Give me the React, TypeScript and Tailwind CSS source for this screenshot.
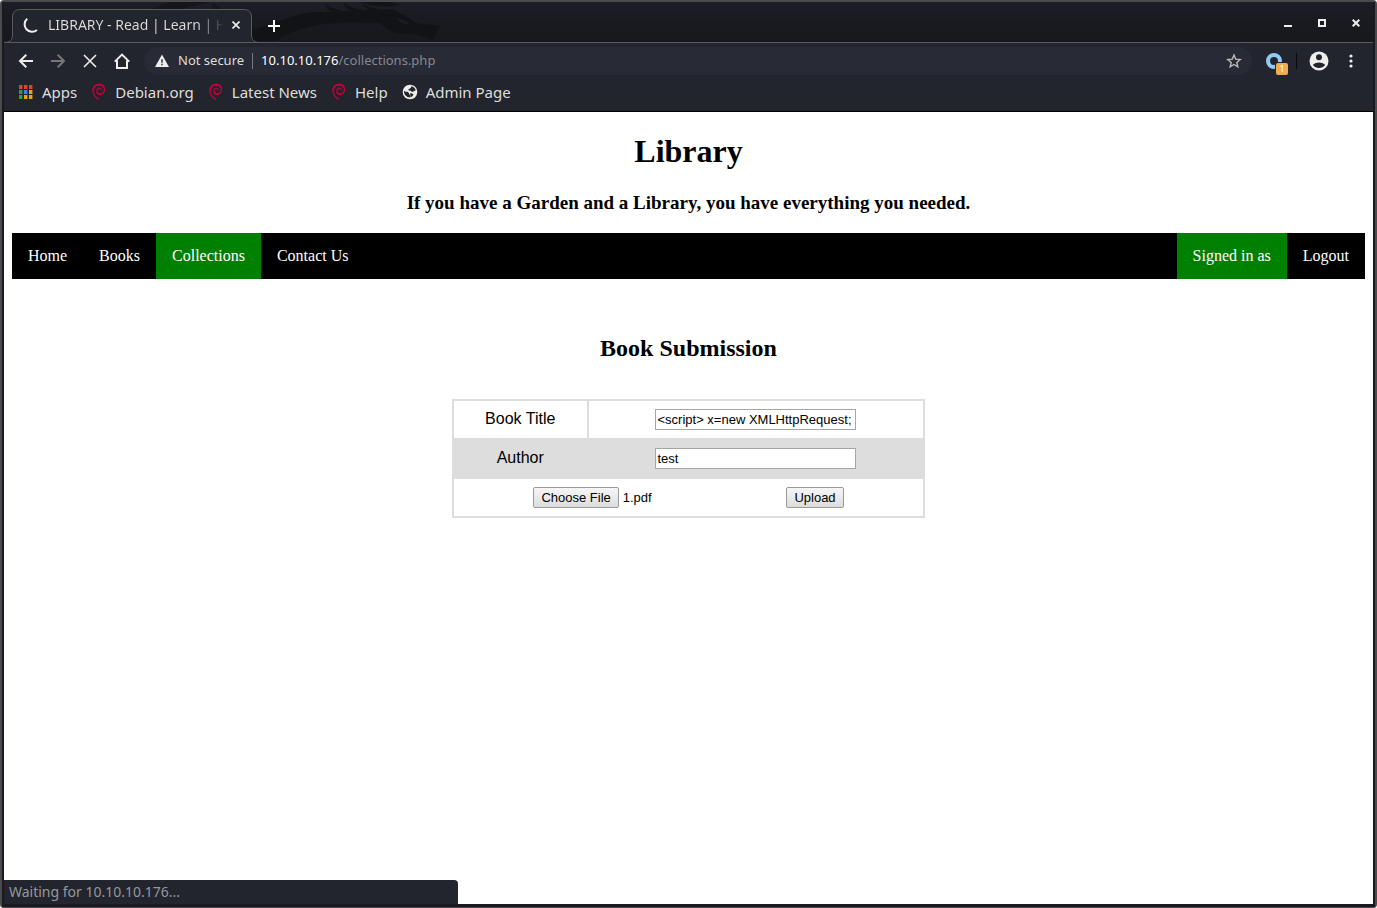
import { useEffect, useRef } from "react";
import type { ReactNode } from "react";

function DebianSwirl() {
  return (
    <svg width="16" height="18" viewBox="0 0 16 18" fill="none" stroke="#c4003a" strokeLinecap="round" aria-hidden="true">
      <path d="M7.600 16.400C4.200 14.300 2 11.400 2 7.800 2 4 4.600 1.500 8 1.500c3.400 0 5.700 2.200 5.500 5.200-.1 2.600-2 4.500-4.200 4.400-2-.1-3.400-1.500-3.400-3.200 0-1.600 1.200-2.800 2.600-2.700 1 .1 1.700.7 1.700 1.500" strokeWidth="1.300" />
      <path d="M2.200 6.500C2.800 3.400 5 1.700 8 1.600c2 0 3.800.8 4.800 2.400" strokeWidth="1.800" />
      <path d="M10.300 10.800c-1.500.7-3.300 0-4.100-1.500" strokeWidth="1.500" />
    </svg>
  );
}

function AppsGrid() {
  const colors = ["#ef3b2f", "#ef3b2f", "#ef3b2f", "#2e9e52", "#3b82f6", "#f0a30a", "#2e9e52", "#f0a30a", "#f0a30a"];
  return (
    <svg width="14" height="14" viewBox="0 0 14 14" aria-hidden="true">
      {colors.map((c, i) => (
        <rect key={i} x={(i % 3) * 5} y={Math.floor(i / 3) * 5} width="3.400" height="4" fill={c} />
      ))}
    </svg>
  );
}

function Globe() {
  return (
    <svg width="16" height="16" viewBox="0 0 16 16" aria-hidden="true">
      <circle cx="8" cy="8" r="7.300" fill="#eeeeec" />
      <path d="M2 6.800C3.600 8.600 5.600 7.200 6.700 8.700c.7 1 .2 2 1.600 2.200v2.600C4.600 13.600 1.700 10.600 2 6.800Z" fill="#23252e" />
      <path d="M9.300 2.200c2.300.5 4 2.100 4.500 4.300-1.600-.2-1.800 1.100-3 1.300-1.600.3-1.500-1.300-3.300-1.300-1 0-1.400-.6-.9-1.300.7-1 2.300-.6 2.400-1.700Z" fill="#23252e" />
      <path d="M8 9.200c1.600-.3 3.200.4 3.300 1.300.1.900-1.200 2.300-2.500 2.700Z" fill="#23252e" />
    </svg>
  );
}

function Dragon() {
  return (
    <svg className="absolute left-[146px] top-0" width="300" height="40" viewBox="0 0 300 40" fill="#121317" aria-hidden="true">
      <path d="M0 14C24 10 34 6 60 0H20C12 3 6 6 0 7ZM62 2c6 0 8 4 14 8l-12-1Z" opacity=".7" />
      <path d="M102 27c24-2 36-17 70-17h12l-7-3-2-6c4 4 10 6 17 8h10l-6-3-3-6c6 6 13 6 19 8h8l-6-3-3-4c6 4 11 4 19 7l13-1 19 11 3 3 25 3-7 14c-9-3-18-7-29-6-9-1-15-3-19-7l-5-4c-36-1-72-3-105 18h-24Z" />
      <path d="m246 15 10 4 3 4-9-3Z" fill="#1b1c23" />
      <path d="m210 0 10 3 17 2 13-2-10-3Z" />
    </svg>
  );
}

function TabShape() {
  return (
    <svg className="absolute bottom-0 left-0" width="260" height="34" viewBox="0 0 260 34" aria-hidden="true">
      <path
        d="M0 33.500C6 33.500 8.500 31 8.500 26V8c0-5 3-7.500 8-7.500h223c5 0 8 2.500 8 7.500v18c0 5 3 7.500 8 7.500h5"
        fill="#23252e"
        stroke="#5b5c5f"
      />
      <path d="M0 33.500h260" stroke="#23252e" />
      <path d="M0 33.500h2M254 33.500h6" stroke="#5b5c5f" />
    </svg>
  );
}

function ToolButton({ label, children }: { label: string; children: ReactNode }) {
  return (
    <button type="button" aria-label={label} className="flex size-8 items-center justify-center">
      {children}
    </button>
  );
}

function TitleBar() {
  return (
    <header className="relative flex h-[41px] items-end overflow-hidden border-b border-[#5b5c5f] bg-linear-to-b from-[#1c1d26] to-[#17181c]">
      <Dragon />
      <div className="relative -mb-px flex h-[34px] w-[260px] shrink-0 items-center pb-[2px]">
        <TabShape />
        <div className="relative flex w-[250px] items-center pl-[19px] pr-2">
          <svg width="16" height="16" viewBox="0 0 16 16" fill="none" stroke="#eeeeec" strokeWidth="2" aria-hidden="true">
            <path d="M4.200 1.700A7 7 0 0 0 14 13" />
          </svg>
          <span className="ml-[9px] w-[176px] whitespace-nowrap bg-linear-to-r from-[#dcdcda] from-85% to-transparent bg-clip-text text-[14px] leading-5 text-transparent">
            LIBRARY - Read | Learn | H
          </span>
          <button type="button" aria-label="Close tab" className="ml-auto flex size-5 shrink-0 items-center justify-center">
            <svg width="8" height="8" viewBox="0 0 8 8" stroke="#eeeeec" strokeWidth="1.600" aria-hidden="true">
              <path d="m.5.500 7 7m0-7-7 7" />
            </svg>
          </button>
        </div>
      </div>
      <button type="button" aria-label="New tab" className="relative flex h-8 w-5 items-center justify-center">
        <svg width="12" height="12" viewBox="0 0 12 12" stroke="#ffffff" strokeWidth="2" aria-hidden="true">
          <path d="M6 0v12M0 6h12" />
        </svg>
      </button>
      <div className="relative ml-auto flex gap-[14px] self-stretch pr-[7px] pt-[2px]">
        <button type="button" aria-label="Minimize" className="flex w-5 items-center justify-center">
          <svg width="8" height="8" viewBox="0 0 8 8" aria-hidden="true"><path d="M0 6h8v2H0z" fill="#eeeeec" /></svg>
        </button>
        <button type="button" aria-label="Maximize" className="flex w-5 items-center justify-center">
          <svg width="8" height="8" viewBox="0 0 8 8" aria-hidden="true"><path d="M1 1h6v6H1z" fill="none" stroke="#eeeeec" strokeWidth="2" /></svg>
        </button>
        <button type="button" aria-label="Close window" className="flex w-5 items-center justify-center">
          <svg width="8" height="8" viewBox="0 0 8 8" aria-hidden="true"><path d="m.7.700 6.600 6.600m0-6.600L.7 7.300" stroke="#eeeeec" strokeWidth="2" /></svg>
        </button>
      </div>
    </header>
  );
}

function Toolbar() {
  return (
    <div className="flex h-9 items-center px-[6px]">
      <ToolButton label="Back">
        <svg width="16" height="16" viewBox="0 0 16 16" fill="none" stroke="#eeeeec" strokeWidth="2" aria-hidden="true"><path d="M15 8H2.500M8.300 1.700 2 8l6.300 6.300" /></svg>
      </ToolButton>
      <ToolButton label="Forward">
        <svg width="16" height="16" viewBox="0 0 16 16" fill="none" stroke="#76777a" strokeWidth="2" aria-hidden="true"><path d="M1 8h12.500M7.700 1.700 14 8l-6.300 6.300" /></svg>
      </ToolButton>
      <ToolButton label="Stop">
        <svg width="14" height="14" viewBox="0 0 14 14" stroke="#eeeeec" strokeWidth="1.600" aria-hidden="true"><path d="m1 1 12 12m0-12L1 13" /></svg>
      </ToolButton>
      <ToolButton label="Home">
        <svg width="16" height="16" viewBox="0 0 16 16" fill="none" stroke="#eeeeec" strokeWidth="2" aria-hidden="true"><path d="M.8 8.600 8 1.600l7.200 7M3 7.400V15h10V7.400" /></svg>
      </ToolButton>
      <div className="ml-[6px] flex h-7 grow items-center rounded-full bg-[#282a35] pl-[11px] pr-[10px] text-[13px]">
        <svg width="14" height="14" viewBox="0 0 14 14" aria-hidden="true">
          <path d="M7 .5 14 13H0Z" fill="#eeeeec" />
          <path d="M6.300 5.200h1.400v3.600H6.300zM6.300 9.800h1.400v1.500H6.300z" fill="#282a35" />
        </svg>
        <span className="ml-[9px] whitespace-nowrap text-[#dededc]">Not secure</span>
        <span className="ml-2 h-4 w-px bg-[#77787c]" />
        <div className="relative ml-2 grow">
          <span aria-hidden="true" className="whitespace-nowrap text-white">
            10.10.10.176<span className="text-[#86888d]">/collections.php</span>
          </span>
          <input
            aria-label="Address"
            defaultValue="10.10.10.176/collections.php"
            className="absolute inset-0 w-full bg-transparent text-transparent outline-none"
          />
        </div>
        <button type="button" aria-label="Bookmark this page">
          <svg width="16" height="16" viewBox="0 0 16 16" fill="none" stroke="#bcbcbc" strokeWidth="1.400" aria-hidden="true">
            <path d="m8 2 1.700 4.100 4.500.4-3.400 2.900 1 4.400L8 11.500l-3.800 2.300 1-4.400-3.400-2.900 4.500-.4Z" />
          </svg>
        </button>
      </div>
      <button type="button" aria-label="Extension" className="relative ml-[14px] size-6">
        <svg width="24" height="24" viewBox="0 0 24 24" aria-hidden="true">
          <circle cx="8" cy="12" r="6" fill="none" stroke="#90caf4" strokeWidth="4" />
          <rect x="9" y="13" width="14" height="14" fill="#23252e" />
        </svg>
        <span className="absolute -bottom-[2px] right-[2px] flex size-3 items-center justify-center rounded-xs bg-[#f0ad4e] text-[9px] leading-3 text-white">1</span>
      </button>
      <span className="ml-[6px] h-4 w-px bg-[#08090b]" />
      <button type="button" aria-label="Profile" className="ml-3">
        <svg width="20" height="20" viewBox="0 0 20 20" aria-hidden="true">
          <circle cx="10" cy="10" r="9.500" fill="#eeeeec" />
          <circle cx="10" cy="6.300" r="3" fill="#23252e" />
          <path d="M3.900 14.100C5.500 10.500 14.500 10.500 16.100 14.100 13.500 18 6.500 18 3.900 14.100Z" fill="#23252e" />
        </svg>
      </button>
      <button type="button" aria-label="Menu" className="ml-3 mr-[6px] flex w-5 justify-center">
        <svg width="4" height="14" viewBox="0 0 4 14" fill="#eeeeec" aria-hidden="true">
          <circle cx="2" cy="2" r="1.600" /><circle cx="2" cy="7" r="1.600" /><circle cx="2" cy="12" r="1.600" />
        </svg>
      </button>
    </div>
  );
}

function Bookmark({ icon, children }: { icon: ReactNode; children: ReactNode }) {
  return (
    <a href="#" className="flex items-center gap-2 whitespace-nowrap">
      <span className="flex w-4 justify-center">{icon}</span>
      {children}
    </a>
  );
}

function Bookmarks() {
  return (
    <nav aria-label="Bookmarks" className="flex h-[33px] items-center gap-[14px] border-b border-black px-[14px] pb-[6px] text-[15px] text-[#dededc]">
      <Bookmark icon={<AppsGrid />}>Apps</Bookmark>
      <Bookmark icon={<DebianSwirl />}>Debian.org</Bookmark>
      <Bookmark icon={<DebianSwirl />}>Latest News</Bookmark>
      <Bookmark icon={<DebianSwirl />}>Help</Bookmark>
      <Bookmark icon={<Globe />}>Admin Page</Bookmark>
    </nav>
  );
}

function NavLink({ active = false, children }: { active?: boolean; children: ReactNode }) {
  return (
    <a href="#" className={active ? "bg-[#008000] px-4 py-[14px]" : "px-4 py-[14px]"}>
      {children}
    </a>
  );
}

function SubmissionForm() {
  const file = useRef<HTMLInputElement>(null);
  useEffect(() => {
    const transfer = new DataTransfer();
    transfer.items.add(new File(["%PDF"], "1.pdf", { type: "application/pdf" }));
    if (file.current) file.current.files = transfer.files;
  }, []);
  const field = "mx-auto block h-[21px] w-[201px] border border-[#a6a6a6] bg-white px-px text-[13px] leading-4 outline-none";
  return (
    <form className="flex justify-center" onSubmit={(e) => e.preventDefault()}>
      <table className="w-[35%] min-w-[440px] border-collapse text-center font-['Liberation_Sans',Arial,sans-serif] text-[16px] leading-[18px] text-black">
        <tbody>
          <tr>
            <td className="w-[135px] border-2 border-[#dddddd] px-2 pb-[9px] pt-[7px]"><label htmlFor="title">Book Title</label></td>
            <td className="border-2 border-[#dddddd] p-2">
              <input id="title" type="text" defaultValue="<script> x=new XMLHttpRequest;" className={field} />
            </td>
          </tr>
          <tr className="bg-[#dddddd]">
            <td className="border-2 border-[#dddddd] px-2 pb-[9px] pt-[7px]"><label htmlFor="author">Author</label></td>
            <td className="border-2 border-[#dddddd] p-2">
              <input id="author" type="text" defaultValue="test" className={field} />
            </td>
          </tr>
          <tr>
            <td colSpan={2} className="border-2 border-[#dddddd] p-2">
              <div className="flex justify-center gap-1 text-[13px]">
                <input
                  ref={file}
                  type="file"
                  aria-label="Book file"
                  className="h-[21px] w-[249px] text-left leading-[15px] file:h-[21px] file:rounded-xs file:border file:border-solid file:border-[#999999] file:bg-linear-to-b file:from-[#f6f6f6] file:to-[#dddddd] file:px-[7px] file:text-[13px]"
                />
                <button type="submit" className="h-[21px] rounded-xs border border-[#999999] bg-linear-to-b from-[#f6f6f6] to-[#dddddd] px-[7px] leading-[15px]">
                  Upload
                </button>
              </div>
            </td>
          </tr>
        </tbody>
      </table>
    </form>
  );
}

export default function App() {
  return (
    <div className="flex min-h-screen flex-col rounded-sm border-x-2 border-b border-t-2 border-[#4b4b4d] bg-[#191a20] font-['Noto_Sans',sans-serif]">
      <div className="flex grow flex-col border-x-2 border-b-3 border-[#191a20]">
        <div className="bg-[#23252e]">
          <TitleBar />
          <Toolbar />
          <Bookmarks />
        </div>
        <main className="relative grow bg-white px-2 pb-8 pt-[21px] text-center font-['Liberation_Serif',serif] text-black">
          <h1 className="text-[32px] font-bold leading-[37px]">Library</h1>
          <h3 className="mt-[22px] text-[19px] font-bold leading-[22px]">If you have a Garden and a Library, you have everything you needed.</h3>
          <nav aria-label="Site" className="mt-[19px] flex bg-black text-[16px] leading-[18px] text-white">
            <NavLink>Home</NavLink>
            <NavLink>Books</NavLink>
            <NavLink active>Collections</NavLink>
            <NavLink>Contact Us</NavLink>
            <div className="ml-auto flex">
              <NavLink active>Signed in as</NavLink>
              <NavLink>Logout</NavLink>
            </div>
          </nav>
          <h2 className="mb-[37px] mt-[55px] text-[24px] font-bold leading-7">Book Submission</h2>
          <SubmissionForm />
          <div role="status" className="absolute bottom-0 left-0 h-6 w-[454px] max-w-full rounded-tr-sm bg-[#23252e] px-[5px] text-left font-['Noto_Sans',sans-serif] text-[14px] leading-6 text-[#97989b]">
            Waiting for 10.10.10.176...
          </div>
        </main>
      </div>
    </div>
  );
}
